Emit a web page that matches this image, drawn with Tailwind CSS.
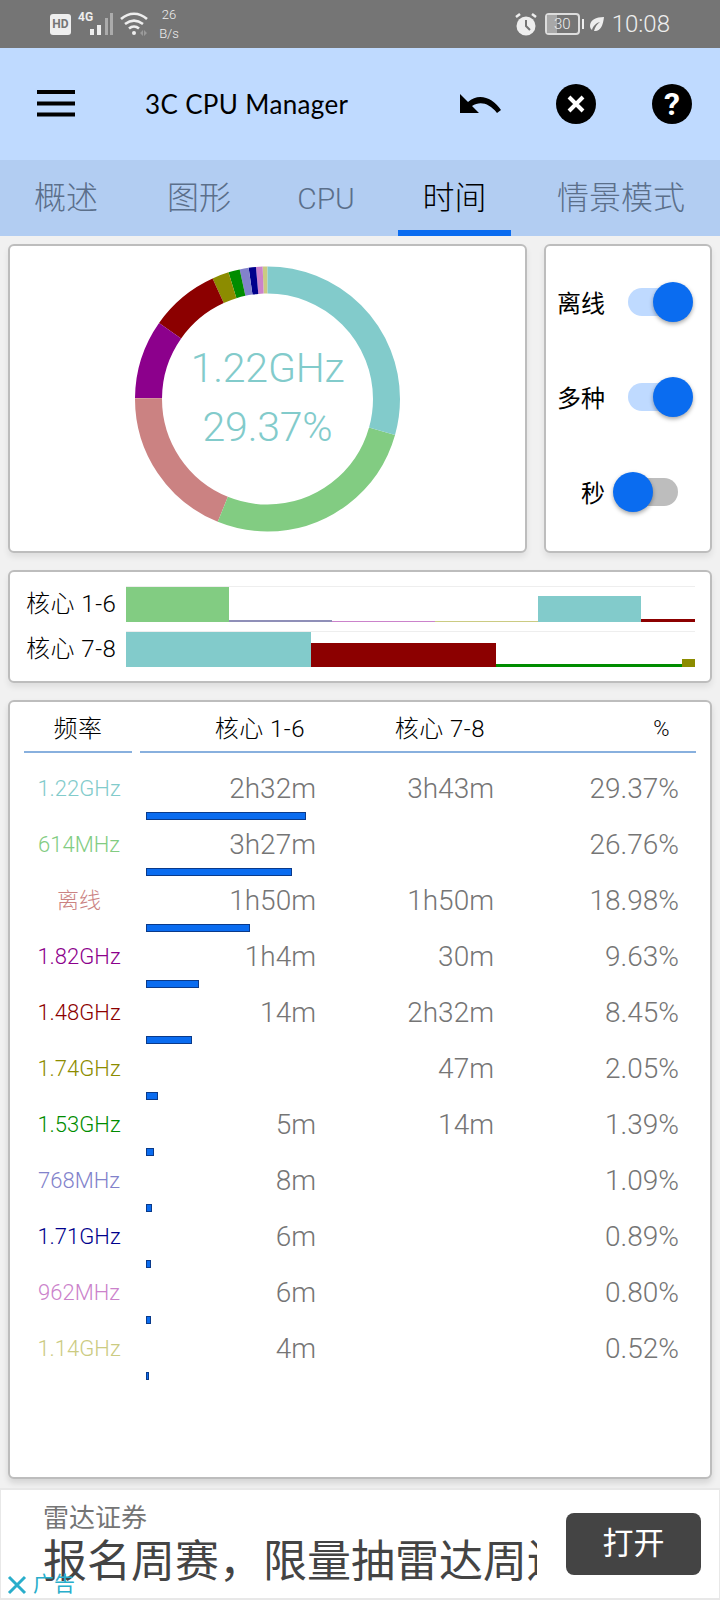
<!DOCTYPE html>
<html>
<head>
    <title>3C CPU Manager</title>
    <script src="https://cdn.jsdelivr.net/npm/@tailwindcss/browser@4"></script>
</head>
<body class="bg-[#f1f1f1] font-['Roboto','Noto_Sans_CJK_SC',sans-serif]">
<div class="w-[720px] h-[1600px] flex flex-col overflow-hidden">

    <!-- Status bar -->
    <div class="h-[48px] bg-[#757575] flex items-center justify-between pl-[50px] pr-[50px] text-[#eeeeee]">
        <div class="flex items-center">
            <div class="w-[21px] h-[21px] bg-[#eeeeee] rounded-[3px] text-[#757575] text-[12px] font-bold flex items-center justify-center">HD</div>
            <div class="relative w-[36px] h-[24px] ml-[6px]">
                <span class="absolute left-[1px] -top-[3px] text-[12px] leading-[16px] font-bold">4G</span>
                <svg class="absolute left-0 top-0" width="36" height="24" viewBox="0 0 36 24" fill="#eeeeee">
                    <rect x="13" y="17" width="4" height="6"/><rect x="20" y="13" width="4" height="10"/>
                    <rect x="28" y="6" width="3" height="17" opacity=".45"/><rect x="33" y="1" width="3" height="22" opacity=".45"/>
                </svg>
            </div>
            <svg class="ml-[7px]" width="30" height="24" viewBox="0 0 30 24" fill="none" stroke="#eeeeee" stroke-width="2.6">
                <path d="M1 7c8-7 18-7 26 0"/><path d="M5 12c6-4.500 12-4.500 18 0"/><path d="M9 16.500c3-2.500 7-2.500 10 0"/>
                <circle cx="14" cy="21" r="2" fill="#eeeeee" stroke="none"/>
                <path d="M20 21l3-3v6zM24 18l3 3-3 3z" fill="#9a9a9a" stroke="none"/>
            </svg>
            <div class="ml-[7px] w-[24px] text-[13px] leading-[19px] text-center font-light">26<br>B/s</div>
        </div>
        <div class="flex items-center">
            <svg width="24" height="26" viewBox="0 0 24 26">
                <circle cx="12" cy="15" r="9.500" fill="#eeeeee"/>
                <path d="M12 9v6l4 4" fill="none" stroke="#757575" stroke-width="2"/>
                <path d="M2 6l4-3M22 6l-4-3" stroke="#eeeeee" stroke-width="2.500"/>
            </svg>
            <div class="relative ml-[7px] w-[35px] h-[22px] border-2 border-[#dddddd] rounded-[4px] text-[15px] leading-[18px] text-center font-light">
                <div class="absolute left-0 top-0 bottom-0 w-[10px] bg-[#a8a8a8]"></div>
                <span class="relative">30</span>
            </div>
            <div class="w-[2px] h-[10px] bg-[#eeeeee] ml-[2px]"></div>
            <svg class="ml-[5px]" width="16" height="18" viewBox="0 0 16 18">
                <path d="M15 2C7 2 1 5 1 11c0 2 1 3 2 4 1-4 4-7 8-8-3 2-5 5-6 9 6 1 9-5 10-14z" fill="#eeeeee"/>
            </svg>
            <div class="ml-[7px] text-[24px] leading-none font-light">10:08</div>
        </div>
    </div>

    <!-- App bar -->
    <div class="h-[112px] bg-[#bfdaff] flex items-center text-black">
        <svg class="ml-[37px]" width="38" height="30" viewBox="0 0 38 30" fill="#000000">
            <rect x="0" y="1" width="38" height="4"/><rect x="0" y="12.500" width="38" height="4"/><rect x="0" y="23.500" width="38" height="4"/>
        </svg>
        <div class="ml-[70px] w-[306px] text-[26px] tracking-[0.35px] font-['Lato','Roboto',sans-serif]">3C CPU Manager</div>
        <svg class="ml-[9px]" width="41" height="20" viewBox="0 0 41 20">
            <path d="M0 0v19h19l-7-7c8-5 17-3 25 7l4-3C33 4 19-2 8 8z" fill="#000000"/>
        </svg>
        <div class="ml-[55px] w-[40px] h-[40px] rounded-full bg-black flex items-center justify-center">
            <svg width="22" height="22" viewBox="0 0 22 22"><path d="M4 4l14 14M18 4L4 18" stroke="#ffffff" stroke-width="4"/></svg>
        </div>
        <div class="ml-[56px] w-[40px] h-[40px] rounded-full bg-black flex items-center justify-center text-white text-[32px] font-bold leading-none">?</div>
    </div>

    <!-- Tabs -->
    <div class="h-[76px] bg-[#b2cdf2] flex text-[32px] text-[#5b6f8a] font-light">
        <div class="w-[132px] flex items-center justify-center">概述</div>
        <div class="w-[134px] flex items-center justify-center">图形</div>
        <div class="w-[132px] pr-[12px] flex items-center justify-center text-[30px]">CPU</div>
        <div class="w-[113px] pt-[6px] flex items-center justify-center text-black border-b-[6px] border-[#0a6cf0]">时间</div>
        <div class="flex-1 pl-[11px] flex items-center justify-center whitespace-nowrap">情景模式</div>
    </div>

    <!-- Donut + switches -->
    <div class="flex gap-[17px] mt-[8px] px-[8px]">
        <div class="relative w-[519px] h-[309px] bg-white rounded-[6px] border-2 border-[#bdbdbd] shadow-[0_4px_6px_rgba(0,0,0,.08)] flex justify-center">
            <svg class="absolute left-[-2px] top-[-2px]" width="520" height="309" viewBox="0 0 520 309" fill="none" stroke-width="27">
                <g transform="rotate(-90 259.500 155)">
                    <circle cx="259.500" cy="155" r="119" pathLength="100" stroke="#cbcb82" stroke-dasharray="0.59 99.41" stroke-dashoffset="-99.41"/>
                    <circle cx="259.500" cy="155" r="119" pathLength="100" stroke="#cb82cb" stroke-dasharray="0.8 99.2" stroke-dashoffset="-98.61"/>
                    <circle cx="259.500" cy="155" r="119" pathLength="100" stroke="#00008c" stroke-dasharray="0.89 99.11" stroke-dashoffset="-97.72"/>
                    <circle cx="259.500" cy="155" r="119" pathLength="100" stroke="#8282cb" stroke-dasharray="1.09 98.91" stroke-dashoffset="-96.63"/>
                    <circle cx="259.500" cy="155" r="119" pathLength="100" stroke="#008c00" stroke-dasharray="1.39 98.61" stroke-dashoffset="-95.24"/>
                    <circle cx="259.500" cy="155" r="119" pathLength="100" stroke="#8c8c00" stroke-dasharray="2.05 97.95" stroke-dashoffset="-93.19"/>
                    <circle cx="259.500" cy="155" r="119" pathLength="100" stroke="#8c0000" stroke-dasharray="8.45 91.55" stroke-dashoffset="-84.74"/>
                    <circle cx="259.500" cy="155" r="119" pathLength="100" stroke="#8c008c" stroke-dasharray="9.63 90.37" stroke-dashoffset="-75.11"/>
                    <circle cx="259.500" cy="155" r="119" pathLength="100" stroke="#cb8282" stroke-dasharray="18.98 81.02" stroke-dashoffset="-56.13"/>
                    <circle cx="259.500" cy="155" r="119" pathLength="100" stroke="#82cc82" stroke-dasharray="26.76 73.24" stroke-dashoffset="-29.37"/>
                    <circle cx="259.500" cy="155" r="119" pathLength="100" stroke="#82cbcb" stroke-dasharray="29.37 70.63"/>
                </g>
            </svg>
            <div class="relative mt-[93px] text-[#82cbcb] text-[41px] leading-[59px] text-center font-light tracking-[-0.2px]">1.22GHz<br>29.37%</div>
        </div>
        <div class="w-[168px] h-[309px] bg-white rounded-[6px] border-2 border-[#bdbdbd] shadow-[0_4px_6px_rgba(0,0,0,.08)] flex flex-col pt-[36px] gap-[55px] text-[24px] text-black">
            <div class="h-[40px] flex items-center justify-end pr-[32px]">
                <span class="mr-[23px] mt-[3px]">离线</span>
                <div class="relative w-[50px] h-[28px] rounded-full bg-[#bfdaff]">
                    <div class="absolute right-[-15px] top-[-6px] w-[40px] h-[40px] rounded-full bg-[#0a6cf0] shadow-[0_2px_4px_rgba(0,0,0,.35)]"></div>
                </div>
            </div>
            <div class="h-[40px] flex items-center justify-end pr-[32px]">
                <span class="mr-[23px] mt-[3px]">多种</span>
                <div class="relative w-[50px] h-[28px] rounded-full bg-[#bfdaff]">
                    <div class="absolute right-[-15px] top-[-6px] w-[40px] h-[40px] rounded-full bg-[#0a6cf0] shadow-[0_2px_4px_rgba(0,0,0,.35)]"></div>
                </div>
            </div>
            <div class="h-[40px] flex items-center justify-end pr-[32px]">
                <span class="mr-[23px] mt-[3px]">秒</span>
                <div class="relative w-[50px] h-[28px] rounded-full bg-[#bdbdbd]">
                    <div class="absolute left-[-15px] top-[-6px] w-[40px] h-[40px] rounded-full bg-[#0a6cf0] shadow-[0_2px_4px_rgba(0,0,0,.35)]"></div>
                </div>
            </div>
        </div>
    </div>

    <!-- Timeline -->
    <div class="mx-[8px] mt-[17px] w-[704px] h-[113px] bg-white rounded-[6px] border-2 border-[#bdbdbd] shadow-[0_4px_6px_rgba(0,0,0,.08)] pt-[14px] text-[24px] tracking-[0.5px] font-light text-black">
        <div class="flex h-[36px] items-center">
            <div class="w-[106px] pl-[16px] whitespace-nowrap">核心 1-6</div>
            <div class="w-[569px] h-[36px] ml-[10px] border-t border-[#eeeeee] flex items-end">
                <div class="w-[103px] h-[35px] bg-[#82cc82]"></div>
                <div class="w-[103px] h-[2px] bg-[#8f8fb8]"></div>
                <div class="w-[103px] h-[1px] bg-[#cb82cb]"></div>
                <div class="w-[103px] h-[1px] bg-[#cbcb82]"></div>
                <div class="w-[103px] h-[26px] bg-[#82cbcb]"></div>
                <div class="w-[54px] h-[3px] bg-[#8c0000]"></div>
            </div>
        </div>
        <div class="flex h-[36px] items-center mt-[9px]">
            <div class="w-[106px] pl-[16px] whitespace-nowrap">核心 7-8</div>
            <div class="w-[569px] h-[36px] ml-[10px] border-t border-[#eeeeee] flex items-end">
                <div class="w-[185px] h-[35px] bg-[#82cbcb]"></div>
                <div class="w-[185px] h-[24px] bg-[#8c0000]"></div>
                <div class="w-[186px] h-[3px] bg-[#008c00]"></div>
                <div class="w-[13px] h-[8px] bg-[#8c8c00]"></div>
            </div>
        </div>
    </div>

    <!-- Table -->
    <div class="mx-[8px] mt-[17px] w-[704px] h-[779px] shrink-0 bg-white rounded-[6px] border-2 border-[#bdbdbd] shadow-[0_4px_6px_rgba(0,0,0,.12)]">
        <div class="flex h-[41px] ml-[14px] mr-[14px] mt-[10px] text-[24px] tracking-[0.5px] font-light text-black">
            <div class="w-[108px] border-b-2 border-[#88b0de] flex items-center justify-center pb-[6px]">频率</div>
            <div class="ml-[8px] flex-1 border-b-2 border-[#88b0de] flex items-center pb-[6px] whitespace-nowrap">
                <div class="w-[165px] text-right">核心 1-6</div>
                <div class="w-[180px] text-right">核心 7-8</div>
                <div class="flex-1 text-right pr-[26px] text-[22px]">%</div>
            </div>
        </div>
        <div class="pt-[15px] text-[28px] font-light text-[#757575]">

            <div class="h-[56px] flex">
                <div class="w-[138px] text-center pt-[4px] text-[22px] text-[#82cbcb]">1.22GHz</div>
                <div class="relative w-[168px] text-right">2h32m<div class="absolute left-[-2px] top-[44px] w-[160px] h-[8px] bg-[#0a6cf0] border border-[#0a3a8a]"></div></div>
                <div class="w-[178px] text-right">3h43m</div>
                <div class="w-[185px] text-right">29.37%</div>
            </div>
            <div class="h-[56px] flex">
                <div class="w-[138px] text-center pt-[4px] text-[22px] text-[#82cc82]">614MHz</div>
                <div class="relative w-[168px] text-right">3h27m<div class="absolute left-[-2px] top-[44px] w-[146px] h-[8px] bg-[#0a6cf0] border border-[#0a3a8a]"></div></div>
                <div class="w-[178px] text-right"></div>
                <div class="w-[185px] text-right">26.76%</div>
            </div>
            <div class="h-[56px] flex">
                <div class="w-[138px] text-center pt-[4px] text-[22px] text-[#cb8282]">离线</div>
                <div class="relative w-[168px] text-right">1h50m<div class="absolute left-[-2px] top-[44px] w-[104px] h-[8px] bg-[#0a6cf0] border border-[#0a3a8a]"></div></div>
                <div class="w-[178px] text-right">1h50m</div>
                <div class="w-[185px] text-right">18.98%</div>
            </div>
            <div class="h-[56px] flex">
                <div class="w-[138px] text-center pt-[4px] text-[22px] text-[#8c008c]">1.82GHz</div>
                <div class="relative w-[168px] text-right">1h4m<div class="absolute left-[-2px] top-[44px] w-[53px] h-[8px] bg-[#0a6cf0] border border-[#0a3a8a]"></div></div>
                <div class="w-[178px] text-right">30m</div>
                <div class="w-[185px] text-right">9.63%</div>
            </div>
            <div class="h-[56px] flex">
                <div class="w-[138px] text-center pt-[4px] text-[22px] text-[#8c0000]">1.48GHz</div>
                <div class="relative w-[168px] text-right">14m<div class="absolute left-[-2px] top-[44px] w-[46px] h-[8px] bg-[#0a6cf0] border border-[#0a3a8a]"></div></div>
                <div class="w-[178px] text-right">2h32m</div>
                <div class="w-[185px] text-right">8.45%</div>
            </div>
            <div class="h-[56px] flex">
                <div class="w-[138px] text-center pt-[4px] text-[22px] text-[#8c8c00]">1.74GHz</div>
                <div class="relative w-[168px] text-right"><div class="absolute left-[-2px] top-[44px] w-[12px] h-[8px] bg-[#0a6cf0] border border-[#0a3a8a]"></div></div>
                <div class="w-[178px] text-right">47m</div>
                <div class="w-[185px] text-right">2.05%</div>
            </div>
            <div class="h-[56px] flex">
                <div class="w-[138px] text-center pt-[4px] text-[22px] text-[#008c00]">1.53GHz</div>
                <div class="relative w-[168px] text-right">5m<div class="absolute left-[-2px] top-[44px] w-[8px] h-[8px] bg-[#0a6cf0] border border-[#0a3a8a]"></div></div>
                <div class="w-[178px] text-right">14m</div>
                <div class="w-[185px] text-right">1.39%</div>
            </div>
            <div class="h-[56px] flex">
                <div class="w-[138px] text-center pt-[4px] text-[22px] text-[#8282cb]">768MHz</div>
                <div class="relative w-[168px] text-right">8m<div class="absolute left-[-2px] top-[44px] w-[6px] h-[8px] bg-[#0a6cf0] border border-[#0a3a8a]"></div></div>
                <div class="w-[178px] text-right"></div>
                <div class="w-[185px] text-right">1.09%</div>
            </div>
            <div class="h-[56px] flex">
                <div class="w-[138px] text-center pt-[4px] text-[22px] text-[#00008c]">1.71GHz</div>
                <div class="relative w-[168px] text-right">6m<div class="absolute left-[-2px] top-[44px] w-[5px] h-[8px] bg-[#0a6cf0] border border-[#0a3a8a]"></div></div>
                <div class="w-[178px] text-right"></div>
                <div class="w-[185px] text-right">0.89%</div>
            </div>
            <div class="h-[56px] flex">
                <div class="w-[138px] text-center pt-[4px] text-[22px] text-[#cb82cb]">962MHz</div>
                <div class="relative w-[168px] text-right">6m<div class="absolute left-[-2px] top-[44px] w-[5px] h-[8px] bg-[#0a6cf0] border border-[#0a3a8a]"></div></div>
                <div class="w-[178px] text-right"></div>
                <div class="w-[185px] text-right">0.80%</div>
            </div>
            <div class="h-[56px] flex">
                <div class="w-[138px] text-center pt-[4px] text-[22px] text-[#cbcb82]">1.14GHz</div>
                <div class="relative w-[168px] text-right">4m<div class="absolute left-[-2px] top-[44px] w-[3px] h-[8px] bg-[#0a6cf0] border border-[#0a3a8a]"></div></div>
                <div class="w-[178px] text-right"></div>
                <div class="w-[185px] text-right">0.52%</div>
            </div>

        </div>
    </div>

    <!-- Ad -->
    <div class="relative mt-[9px] h-[112px] shrink-0 bg-white border-y-2 border-x border-[#e8e8e8] flex">
        <div class="w-[494px] ml-[42px] mt-[10px] overflow-hidden">
            <div class="text-[26px] leading-[36px] text-[#757575]">雷达证券</div>
            <div class="text-[44px] leading-[52px] text-[#444444] whitespace-nowrap">报名周赛，限量抽雷达周边</div>
        </div>
        <div class="ml-[29px] mt-[23px] w-[135px] h-[62px] rounded-[8px] bg-[#444444] text-white text-[31px] flex items-center justify-center">打开</div>
        <div class="absolute left-[6px] bottom-[3px] flex items-center text-[21px] leading-none text-[#29aecb]">
            <svg width="20" height="20" viewBox="0 0 20 20"><path d="M2 2l16 16M18 2L2 18" stroke="#29aecb" stroke-width="3"/></svg>
            <span class="ml-[6px]">广告</span>
        </div>
    </div>
</div>
</body>
</html>
